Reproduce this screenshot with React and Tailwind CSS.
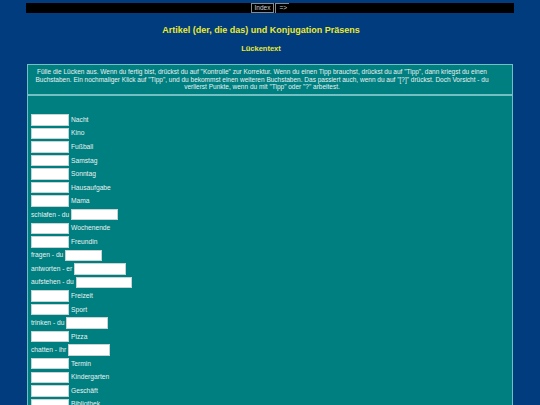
import React from "react";

const rows = [
  { after: "Nacht" },
  { after: "Kino" },
  { after: "Fußball" },
  { after: "Samstag" },
  { after: "Sonntag" },
  { after: "Hausaufgabe" },
  { after: "Mama" },
  { before: "schlafen - du", w: "w-[47px]" },
  { after: "Wochenende" },
  { after: "Freundin" },
  { before: "fragen - du", w: "w-[37px]" },
  { before: "antworten - er", w: "w-[52px]" },
  { before: "aufstehen - du", w: "w-[56px]" },
  { after: "Freizeit" },
  { after: "Sport" },
  { before: "trinken - du", w: "w-[42px]" },
  { after: "Pizza" },
  { before: "chatten - ihr", w: "w-[42px]" },
  { after: "Termin" },
  { after: "Kindergarten" },
  { after: "Geschäft" },
  { after: "Bibliothek" },
];

function Gap({ w = "w-[38px]" }) {
  return (
    <input
      type="text"
      className={`${w} h-[11.5px] bg-white border border-[#c8d4d4] outline-none`}
    />
  );
}

export default function App() {
  return (
    <div className="h-screen overflow-hidden bg-[#013c7f] pt-[3px] font-['Liberation_Sans',Arial,sans-serif]">
      <div className="mx-[26px] h-[10px] bg-black flex justify-center">
        <div className="flex h-[10px] items-stretch">
          <span className="border border-[#8a8a8a] text-[6.5px] leading-[8px] text-[#d0d0d0] px-[3px]">
            Index
          </span>
          <span className="ml-[1px] border-l border-t border-[#8a8a8a] text-[6.5px] leading-[8px] text-[#d0d0d0] pl-[3px] w-[14px]">
            =&gt;
          </span>
        </div>
      </div>

      <h2 className="text-center font-bold text-[9px] text-[#eaea30] mt-[12px] leading-[11px] pr-[18px]">
        Artikel (der, die das) und Konjugation Präsens
      </h2>
      <h3 className="text-center font-bold text-[7.5px] text-[#eaea30] mt-[8px] leading-[9px] pr-[18px]">
        Lückentext
      </h3>

      <div className="mx-[27px] mt-[11px] border border-[#72c0c4] bg-[#007f80] h-[400px]">
        <div className="border-b-2 border-[#72c0c4] pl-[2px] pr-[18px] pt-[3px] pb-[3px] text-center text-[6.5px] leading-[7.7px] text-[#e8f2f2]">
          Fülle die Lücken aus. Wenn du fertig bist, drückst du auf "Kontrolle" zur Korrektur. Wenn du einen Tipp brauchst, drückst du auf "Tipp", dann kriegst du einen Buchstaben. Ein nochmaliger Klick auf "Tipp", und du bekommst einen weiteren Buchstaben. Das passiert auch, wenn du auf "[?]" drückst. Doch Vorsicht - du verlierst Punkte, wenn du mit "Tipp" oder "?" arbeitest.
        </div>
        <div className="pl-[3px] pt-[17px] flex flex-col text-[6.7px] text-[#e8f2f2]">
          {rows.map((r, i) => (
            <div key={i} className="h-[13.55px] flex items-center gap-[2px]">
              {r.before && <span>{r.before}</span>}
              <Gap w={r.w} />
              {r.after && <span>{r.after}</span>}
            </div>
          ))}
        </div>
      </div>
    </div>
  );
}
